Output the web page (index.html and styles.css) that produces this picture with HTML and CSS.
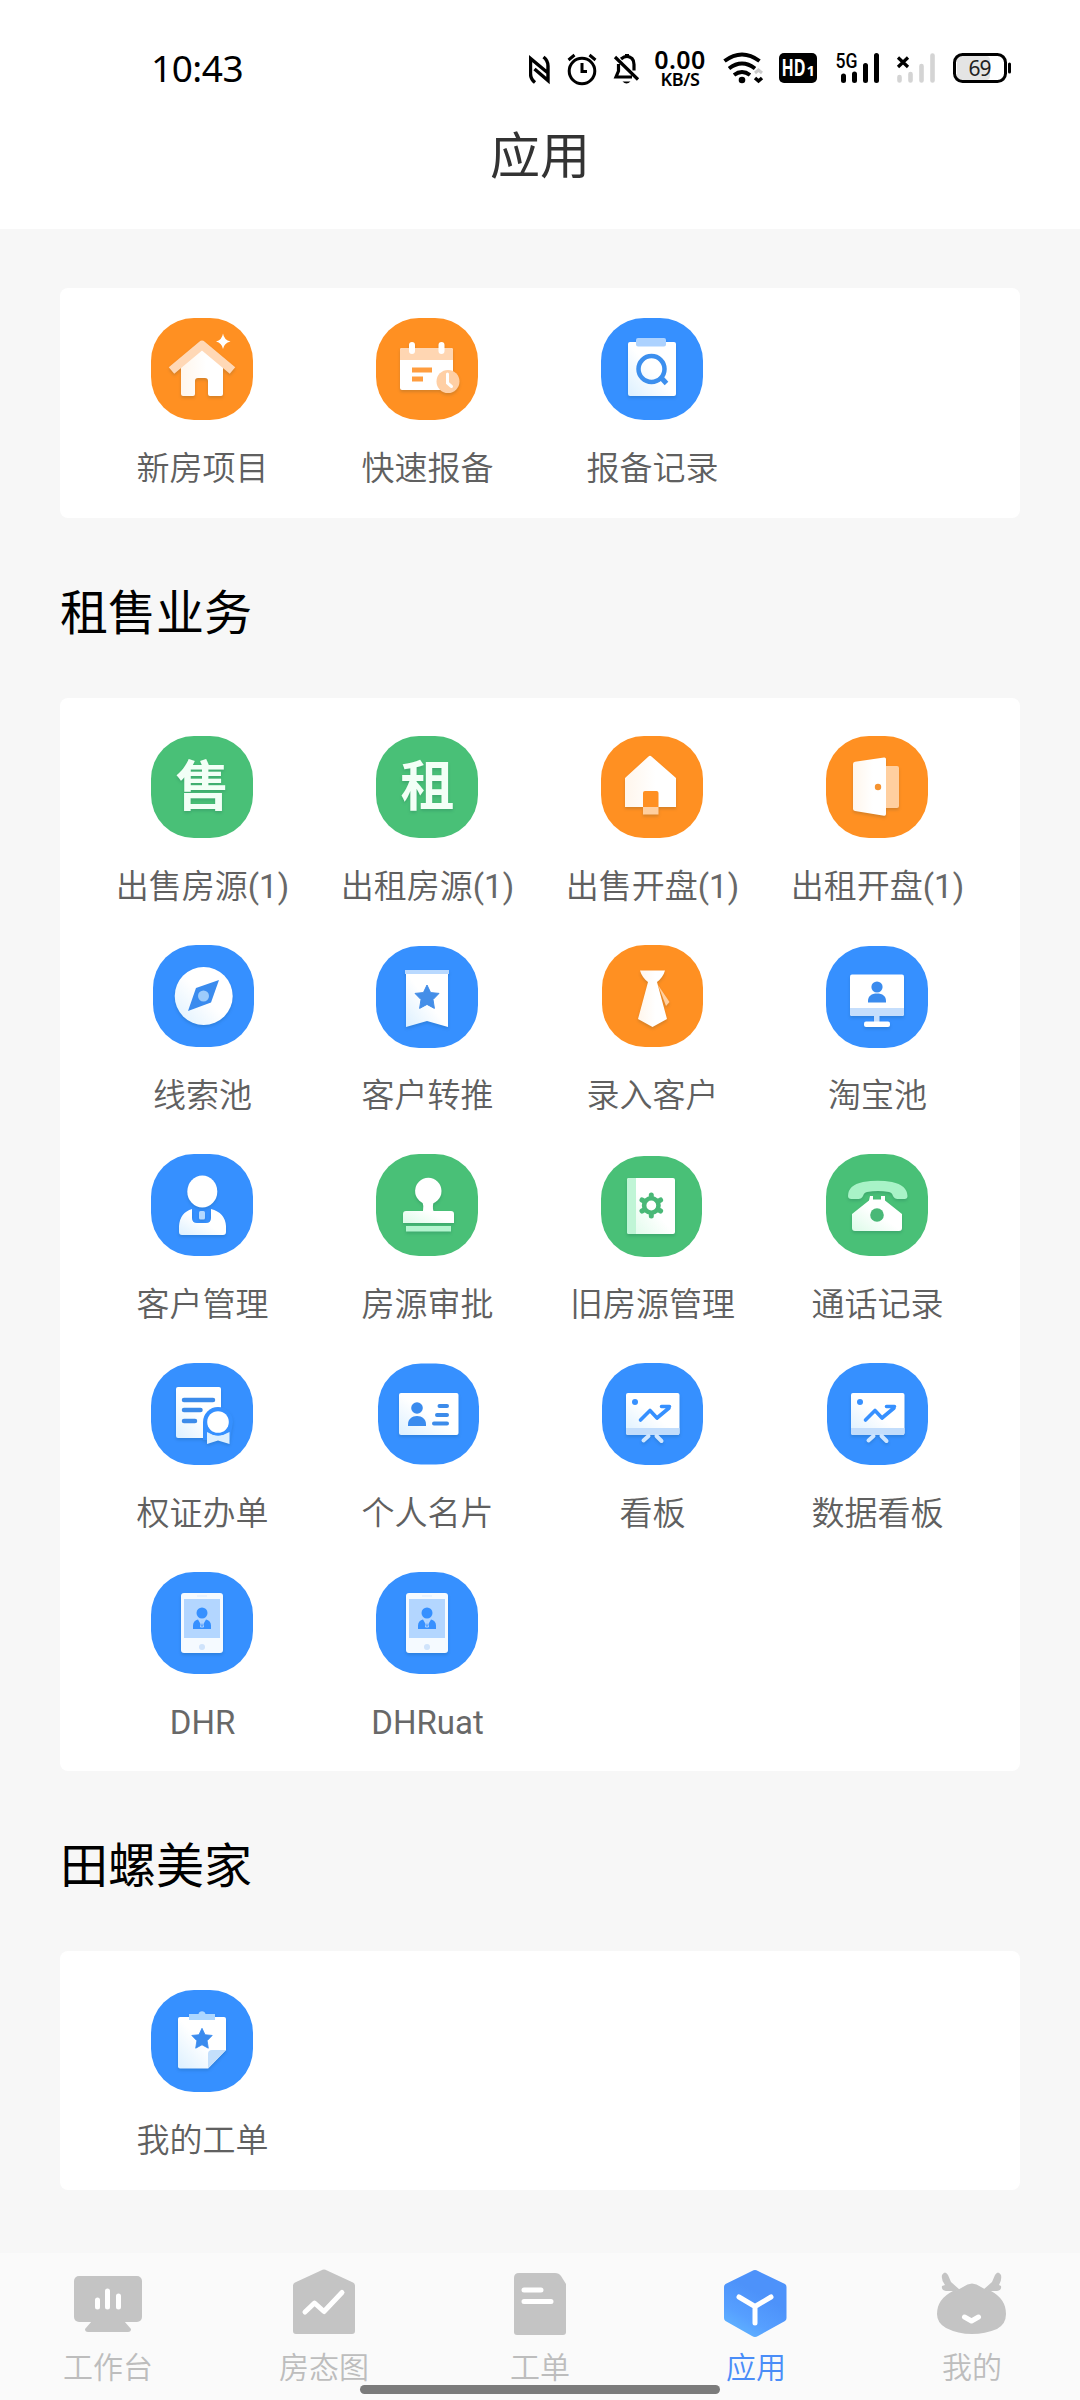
FILE: index.html
```html
<!DOCTYPE html>
<html lang="zh-CN">
<head>
<meta charset="utf-8">
<title>应用</title>
<link rel="stylesheet" href="styles.css">
</head>
<body>
<svg class="defs" width="0" height="0" aria-hidden="true">
  <defs>
    <linearGradient id="paper-blue" x1="0" y1="1" x2="1" y2="0"><stop offset="0" stop-color="#dcf0ff"/><stop offset=".5" stop-color="#fff"/></linearGradient>
    <linearGradient id="paper-green" x1="0" y1="1" x2="1" y2="0"><stop offset="0" stop-color="#dcfbe8"/><stop offset=".5" stop-color="#fff"/></linearGradient>
    <linearGradient id="paper-orange" x1="0" y1="0" x2="1" y2="0"><stop offset="0" stop-color="#fff6ec"/><stop offset=".6" stop-color="#fff"/></linearGradient>
    <linearGradient id="hexagon" x1="0.2" y1="1" x2="0.55" y2="0.35"><stop offset="0" stop-color="#62b6ff"/><stop offset=".45" stop-color="#569fff"/><stop offset="1" stop-color="#4d92fa"/></linearGradient>
    <path id="star" d="M0-12 3.6-4.4 12-3.6 6 2.6 7.4 11.4 0 7.4-7.4 11.4-6 2.6-12-3.6-3.6-4.4Z" stroke-linejoin="round" stroke-width="1"/>
    <g id="chart-board">
      <rect x="25" y="30" width="53.500" height="42" rx="2" fill="url(#paper-blue)"/>
      <path d="M25 65h53.500v5a2 2 0 0 1-2 2h-49.500a2 2 0 0 1-2-2z" fill="#c3ddfb"/>
      <circle cx="34" cy="39" r="3" fill="#3690ff"/>
      <path d="M39.500 57 49 47.500l7 7.500L68 45M60.500 43.500h8" fill="none" stroke="#3690ff" stroke-width="3.600" stroke-linecap="round" stroke-linejoin="round"/>
      <path d="M47.500 73 42.500 77.500M55.500 73l5 5" stroke="#cfe6ff" stroke-width="4" stroke-linecap="round"/>
    </g>
    <g id="phone-card">
      <rect x="30" y="21" width="42" height="60" rx="3" fill="#f5faff"/>
      <rect x="33" y="27" width="36" height="39" fill="#b3d6ff"/>
      <circle cx="51" cy="41" r="5.500" fill="#3690ff"/>
      <path d="M42 57v-3.500c0-3.500 2-5.500 5-6l4 7 4-7c3 .5 5 2.500 5 6V57z" fill="#3690ff"/>
      <path d="m51 48 1.500 7h-3z" fill="#3690ff" stroke="#b3d6ff"/>
      <circle cx="51" cy="75" r="3" fill="#cfe3fb"/>
      <path d="M46 24h10" stroke="#dcebff"/>
    </g>
  </defs>
</svg>

<div class="screen">
  <header class="header">
    <div class="statusbar">
      <span class="clock">10:43</span>
      <div class="status-icons">
        <svg width="22" height="40" viewBox="529 50 22 40"><path d="M535 82.500q-4.500-3.500-4.500-9V58.500L548 73M543.500 57q4.500 3.500 4.500 9v14.500L534.500 69" fill="none" stroke="#000" stroke-width="3.400"/></svg>
        <svg class="i-alarm" width="34" height="40" viewBox="566 50 34 40"><g fill="none" stroke="#000" stroke-width="3"><circle cx="582" cy="71" r="12.800"/><path d="M568.500 60l6-5M595.500 60l-6-5M582 63v8.500h5"/></g></svg>
        <svg class="i-bell" width="28" height="40" viewBox="613 50 28 40"><g fill="none" stroke="#000" stroke-width="3.200"><path d="M615 57 638 79.500M621 59q6-5 11-.5 2 2 2 6v6M618.500 64v7l-2.500 6h16"/></g><path d="M625 54h4v4h-4zM622.500 81.500h8q-4 4-8 0z"/></svg>
        <div class="netspeed"><span class="netspeed-value">0.00</span><span class="netspeed-unit">KB/S</span></div>
        <svg class="i-wifi" width="43" height="40" viewBox="722 50 43 40"><g fill="none" stroke="#000" stroke-width="4"><path d="M724.500 61q17.500-13 35 0M729 68.500q13-10 26 0M734 75q8-6 16 0"/></g><circle cx="742" cy="80" r="3.300"/><path d="M755 73l3.500-3 3.500 3" fill="none" stroke="#ccc" stroke-width="3"/><path d="M755 78l3.500 3 3.500-3" fill="none" stroke="#000" stroke-width="3.500"/></svg>
        <svg class="i-hd" width="38" height="40" viewBox="779 50 38 40"><rect x="779" y="53" width="38" height="30" rx="5"/><text class="hd" transform="translate(781.500 76) scale(.7 1)">HD</text><text class="hd-sub" x="806.500" y="76">1</text></svg>
        <svg class="i-5g" width="45" height="40" viewBox="835 50 45 40"><text class="fiveg" x="835.500" y="68" textLength="22" lengthAdjust="spacingAndGlyphs">5G</text><path d="M843.500 76v4.500M854.500 74v6.500M865.500 65.500v15M876.500 55.500v25" stroke="#000" stroke-width="5" stroke-linecap="round"/></svg>
        <svg class="i-sim" width="40" height="40" viewBox="896 50 40 40"><path d="M898 57.500l10 9.500M908 57.500 898 67" stroke="#000" stroke-width="3.200"/><path d="M899.500 77v3.500M910.500 74v6.500M921.500 66v14.500M932.500 55.500v25" stroke="#d4d4d4" stroke-width="4.600" stroke-linecap="round"/></svg>
        <svg class="i-battery" width="60" height="40" viewBox="952 50 60 40"><rect x="957" y="56" width="33" height="24" rx="4" fill="#e4e4e4"/><rect x="954.500" y="54.500" width="51" height="27" rx="8" fill="none" stroke="#000" stroke-width="3"/><path d="M1009.500 64v8" stroke="#000" stroke-width="3" stroke-linecap="round"/><text class="battery" x="968.500" y="75.500" textLength="23">69</text></svg>
      </div>
    </div>
    <h1 class="title">应用</h1>
  </header>

  <main class="content">
    <section class="card card-projects">
      <div class="tile">
        <svg class="icon orange" viewBox="0 0 102 102"><rect class="bg" width="102" height="102" rx="43"/><g class="glyph"><path d="M30 48 51 31l21 17v28a2 2 0 0 1-2 2H59a2 2 0 0 1-2-2V63a3 3 0 0 0-3-3h-7a3 3 0 0 0-3 3v13a2 2 0 0 1-2 2H32a2 2 0 0 1-2-2z" fill="url(#paper-orange)"/><path d="M20.500 52.500 51 27l30.500 25.500" fill="none" stroke="#ffd8b6" stroke-width="8.500" stroke-linejoin="round"/></g><path d="M72 15.500Q73 22 79.500 23.500 73 25 72 31 71 25 65 23.500 71 22 72 15.500z" fill="#fff"/></svg>
        <span class="label">新房项目</span>
      </div>
      <div class="tile">
        <svg class="icon orange" viewBox="0 0 102 102"><rect class="bg" width="102" height="102" rx="43"/><g class="glyph"><rect x="24" y="30" width="53" height="42" rx="2" fill="#fff"/><path d="M24 42V32a2 2 0 0 1 2-2h49a2 2 0 0 1 2 2v10z" fill="#ffd6b2"/><path d="M36 27v6M65.500 27v6" stroke="#fff" stroke-width="6" stroke-linecap="round"/><path d="M36 52h20M36 61h11" stroke="#ff9d3f" stroke-width="5"/><circle cx="72" cy="63.500" r="11.500" fill="#ffcfa4"/><path d="M71.500 56v9l4 3.500" fill="none" stroke="#fff" stroke-width="3" stroke-linecap="round"/></g></svg>
        <span class="label">快速报备</span>
      </div>
      <div class="tile">
        <svg class="icon blue" viewBox="0 0 102 102"><rect class="bg" width="102" height="102" rx="43"/><g class="glyph"><rect x="27" y="24" width="48" height="54" rx="2" fill="url(#paper-blue)"/><rect x="35" y="20" width="30" height="8.500" rx="2" fill="#acd2ff"/><circle cx="50.500" cy="51" r="13" fill="none" stroke="#3c8fee" stroke-width="4.500"/><path d="M60 59.500l5.500 6" stroke="#3c8fee" stroke-width="5"/></g></svg>
        <span class="label">报备记录</span>
      </div>
    </section>

    <h2 class="section-title">租售业务</h2>
    <section class="card card-rental">
      <div class="tile">
        <svg class="icon green" viewBox="0 0 102 102"><rect class="bg" width="102" height="102" rx="43"/><g class="glyph"><text class="char" x="51.500" y="69.500">售</text></g></svg>
        <span class="label">出售房源<span class="count">(1)</span></span>
      </div>
      <div class="tile">
        <svg class="icon green" viewBox="0 0 102 102"><rect class="bg" width="102" height="102" rx="43"/><g class="glyph"><text class="char" x="51.500" y="69.500">租</text></g></svg>
        <span class="label">出租房源<span class="count">(1)</span></span>
      </div>
      <div class="tile">
        <svg class="icon orange" viewBox="0 0 102 102"><rect class="bg" width="102" height="102" rx="43"/><g class="glyph"><path d="M24 42 47.500 20.500q1.500-1.500 3 0L75 42v29H24z" fill="url(#paper-orange)"/><path d="M42 71V57a2 2 0 0 1 2-2h11.500a2 2 0 0 1 2 2v14z" fill="#ff9022"/><rect x="42" y="71" width="15.500" height="7.500" fill="#ffcf9f"/></g></svg>
        <span class="label">出售开盘<span class="count">(1)</span></span>
      </div>
      <div class="tile">
        <svg class="icon orange" viewBox="0 0 102 102"><rect class="bg" width="102" height="102" rx="43"/><g class="glyph"><rect x="56" y="30" width="17" height="42" rx="2" fill="#ffcf9f"/><path d="M27 28q0-2 2-2.300L58 21.500q2-.3 2 1.500v55q0 2-2 1.700L29 75q-2-.4-2-2z" fill="url(#paper-orange)"/><circle cx="52" cy="51" r="3.200" fill="#f59331"/></g></svg>
        <span class="label">出租开盘<span class="count">(1)</span></span>
      </div>

      <div class="tile">
        <svg class="icon blue" viewBox="0 0 102 102"><rect class="bg" x="2" width="101" height="102" rx="43"/><g class="glyph"><circle cx="52.700" cy="51" r="29" fill="url(#paper-blue)"/><path d="M68 35 60 57.500 37 66l8-23z" fill="#3a8bee"/><circle cx="52.500" cy="51" r="5.500" fill="#9dccfb"/></g></svg>
        <span class="label">线索池</span>
      </div>
      <div class="tile">
        <svg class="icon blue" viewBox="0 0 102 102"><rect class="bg" y="1" width="102" height="102" rx="43"/><g class="glyph"><path d="M30 27h42v55l-21-6-21 6z" fill="url(#paper-blue)"/><rect x="29" y="25" width="44" height="4" fill="#b9d9ff"/><use href="#star" x="51" y="52" fill="#448ee8" stroke="#448ee8"/></g></svg>
        <span class="label">客户转推</span>
      </div>
      <div class="tile">
        <svg class="icon orange" viewBox="0 0 102 102"><rect class="bg" x="1" width="101" height="102" rx="43"/><g class="glyph"><path d="M57 40l11.500 17-3.500 4z" fill="#ffcf9f"/><path d="M39 25.500h25q-2 7-8 11.500L66 74 51.500 82 37 74 47 37q-6-4.500-8-11.500z" fill="url(#paper-orange)"/></g></svg>
        <span class="label">录入客户</span>
      </div>
      <div class="tile">
        <svg class="icon blue" viewBox="0 0 102 102"><rect class="bg" y="1" width="102" height="102" rx="43"/><g class="glyph"><rect x="48" y="70" width="5.500" height="8" fill="#c5defc"/><rect x="24" y="29.500" width="54" height="41.500" rx="2" fill="#fff"/><path d="M24 63h54v6a2 2 0 0 1-2 2H26a2 2 0 0 1-2-2z" fill="#c5defc"/><circle cx="51" cy="42" r="5.600" fill="#3a8bee"/><path d="M42 57.500V56c0-5 3.500-7.500 9-7.500s9 2.500 9 7.500v1.500z" fill="#3a8bee"/><rect x="38" y="76.500" width="26" height="5.500" rx="2" fill="#fff"/></g></svg>
        <span class="label">淘宝池</span>
      </div>

      <div class="tile">
        <svg class="icon blue" viewBox="0 0 102 102"><rect class="bg" width="102" height="102" rx="43"/><g class="glyph"><ellipse cx="51.300" cy="37.500" rx="15" ry="16" fill="#fff"/><path d="M28 72q1-13.500 13-17v9q0 5 5 5h9q5 0 5-5v-9Q74 58.500 75 72v6q0 3-3 3H31q-3 0-3-3z" fill="url(#paper-blue)"/><rect x="48" y="57" width="6" height="8.500" rx="1.500" fill="#b5d9ff"/></g></svg>
        <span class="label">客户管理</span>
      </div>
      <div class="tile">
        <svg class="icon green" viewBox="0 0 102 102"><rect class="bg" width="102" height="102" rx="43"/><g class="glyph"><circle cx="52.300" cy="37" r="13.200" fill="#fff"/><path d="M46 46h12q-2 7-.5 11H75q3 0 3 3v9H27v-9q0-3 3-3h17q1-5-1-11z" fill="url(#paper-green)"/><rect x="30" y="72" width="45" height="5.500" fill="#b4f5cf"/></g></svg>
        <span class="label">房源审批</span>
      </div>
      <div class="tile">
        <svg class="icon green" viewBox="0 0 102 102"><rect class="bg" y="2" width="101" height="101" rx="43"/><g class="glyph"><rect x="26" y="24" width="48" height="56" rx="2" fill="url(#paper-green)"/><path d="M35 24v56h-7a2 2 0 0 1-2-2V26a2 2 0 0 1 2-2z" fill="#c0f5d6"/><circle cx="50.300" cy="51.500" r="7.200" fill="none" stroke="#49b877" stroke-width="4.600"/><path d="M50.300 43v-2M50.300 62v-2M43 47.200l-2-1.200M57.600 47.200l2-1.200M43 55.800 41 57M57.600 55.800l2 1.200" stroke="#49b877" stroke-width="5" stroke-linecap="round"/></g></svg>
        <span class="label">旧房源管理</span>
      </div>
      <div class="tile">
        <svg class="icon green" viewBox="0 0 102 102"><rect class="bg" width="102" height="102" rx="43"/><g class="glyph"><path d="M22 42q0-11 15-14 15-2.500 29 0 15 3 15.500 14 0 3-3 3h-7q-3 0-4.500-3-1-3.500-4-4-11-2-22 0-3 .5-4 4-1.500 3-4.500 3h-7q-3.500 0-3.500-3z" fill="#a8f3c7"/><path d="M44 42h3v3.500h8V42h4v4.500L76 60v14q0 3-3 3H29q-3 0-3-3V60l17-13.500z" fill="url(#paper-green)"/><circle cx="51" cy="61" r="6.800" fill="#49b877"/></g></svg>
        <span class="label">通话记录</span>
      </div>

      <div class="tile">
        <svg class="icon blue" viewBox="0 0 102 102"><rect class="bg" width="102" height="102" rx="43"/><g class="glyph"><rect x="25" y="24" width="45" height="51" rx="2" fill="url(#paper-blue)"/><path d="M33 37h29M33 47h16.500M33 58h11" stroke="#3c8bea" stroke-width="4.500" stroke-linecap="round"/><path d="M52 59a15 15 0 0 1 30 0l-3 18H52z" fill="#3690ff"/><path d="M56 69q11 7 22.500 0V81L67 77.500 56 81z" fill="#dcefff"/><circle cx="67" cy="59" r="13.500" fill="#3690ff"/><circle cx="67" cy="59" r="10.800" fill="#fff"/></g></svg>
        <span class="label">权证办单</span>
      </div>
      <div class="tile">
        <svg class="icon blue" viewBox="0 0 102 102"><rect class="bg" x="2" y=".5" width="101" height="101" rx="43"/><g class="glyph"><rect x="23" y="30" width="59.500" height="42" rx="2" fill="url(#paper-blue)"/><circle cx="41" cy="45" r="5.800" fill="#3a8bee"/><path d="M32 63v-1.500c0-5.500 4-8.500 9-8.500s9 3 9 8.500V63z" fill="#3a8bee"/><path d="M63.500 43H71M61 52h10M58 60.500h13" stroke="#3c8bea" stroke-width="4" stroke-linecap="round"/></g></svg>
        <span class="label">个人名片</span>
      </div>
      <div class="tile">
        <svg class="icon blue" viewBox="0 0 102 102"><rect class="bg" x="1" width="101" height="102" rx="43"/><g class="glyph"><use href="#chart-board"/></g></svg>
        <span class="label">看板</span>
      </div>
      <div class="tile">
        <svg class="icon blue" viewBox="0 0 102 102"><rect class="bg" x="1" width="101" height="102" rx="43"/><g class="glyph"><use href="#chart-board"/></g></svg>
        <span class="label">数据看板</span>
      </div>

      <div class="tile">
        <svg class="icon blue" viewBox="0 0 102 102"><rect class="bg" width="102" height="102" rx="43"/><g class="glyph"><use href="#phone-card"/></g></svg>
        <span class="label latin">DHR</span>
      </div>
      <div class="tile">
        <svg class="icon blue" viewBox="0 0 102 102"><rect class="bg" width="102" height="102" rx="43"/><g class="glyph"><use href="#phone-card"/></g></svg>
        <span class="label latin">DHRuat</span>
      </div>
    </section>

    <h2 class="section-title">田螺美家</h2>
    <section class="card card-home">
      <div class="tile">
        <svg class="icon blue" viewBox="0 0 102 102"><rect class="bg" width="102" height="102" rx="43"/><g class="glyph"><path d="M29 27h44q2 0 2 2v31L57 78.500H29q-2 0-2-2V29q0-2 2-2z" fill="url(#paper-blue)"/><path d="M75 60 57 78.500V64q0-4 4-4z" fill="#c4dffb"/><path d="M38 30v-6h9.500a3.600 3.600 0 0 1 7 0H64v6z" fill="#acd7ff"/><use href="#star" transform="translate(51 48.500) scale(.85)" fill="#3a8bee" stroke="#3a8bee"/></g></svg>
        <span class="label">我的工单</span>
      </div>
    </section>
  </main>

  <nav class="tabbar">
    <div class="tab">
      <svg class="tab-icon" viewBox="68 2263 80 80"><rect x="74" y="2276" width="68" height="46" rx="5"/><path d="M92 2321h32l7 8q0 3-3 3H88q-3 0-3-3z"/><path d="M97.500 2300v7M107.500 2291v16M118.500 2296v11" class="line"/></svg>
      <span>工作台</span>
    </div>
    <div class="tab">
      <svg class="tab-icon" viewBox="284 2263 80 80"><path d="M321 2270.500q3-2 6 0l26 12q2 1 2 3V2331q0 3-3 3h-56q-3 0-3-3v-45.500q0-2 2-3z"/><path d="M305 2312l9.500-9 9.500 8.500 18-19" class="line"/></svg>
      <span>房态图</span>
    </div>
    <div class="tab">
      <svg class="tab-icon" viewBox="500 2263 80 80"><path d="M519 2273h36q4 0 6 3l5 8v48q0 3-3 3h-46q-3 0-3-3v-54q0-5 5-5z"/><path d="M524 2290h17M524 2301.500h27" class="line"/></svg>
      <span>工单</span>
    </div>
    <div class="tab active">
      <svg class="tab-icon" viewBox="716 2263 80 80"><path d="M752 2271q3-2 6 0l27 13q1.500 1 1.500 3v31q0 2-1.500 3l-27 15q-3 2-6 0l-26.500-15q-1.500-1-1.500-3v-31q0-2 1.500-3z" fill="url(#hexagon)"/><path d="M739 2297l16 9.500 16-9.500M755 2306v17" class="line"/></svg>
      <span>应用</span>
    </div>
    <div class="tab">
      <svg class="tab-icon" viewBox="932 2263 80 80"><path d="M953 2291q6-1 10-4 9-7 18 0 4 3 10 4 15 8 15 23 0 10-9 15-12 5-25 5-14 0-26-6-9-5-9-14 0-15 16-23z"/><path d="M956 2291h-10q-5-1-4-5l3-1q-4-5-3-10 3-5 6 0l3 7 9 8zM988 2291h9q5-1 4-5l-2-1q3-5 2-10-3-5-6 0l-3 7-9 8z"/><path d="M964.500 2317l7 4 7-4" class="line"/></svg>
      <span>我的</span>
    </div>
    <div class="home-indicator"></div>
  </nav>
</div>
</body>
</html>
```
FILE: styles.css
```css
* { box-sizing: border-box; }

body {
  margin: 0;
  background: #f7f7f7;
  font-family: Roboto, "Noto Sans CJK SC", sans-serif;
}

.defs { position: absolute; }

.screen {
  display: flex;
  flex-direction: column;
  width: 1080px;
  height: 2400px;
}

.header {
  flex: none;
  height: 229px;
  background: #fff;
}

/* Status bar */
.statusbar {
  display: flex;
  justify-content: space-between;
  padding: 50px 68px 0 151px;
  height: 110px;
}

.clock {
  font: 400 37px/35px "Noto Sans", sans-serif;
  letter-spacing: -.5px;
  color: #000;
}

.status-icons { display: flex; height: 40px; }
.status-icons svg { display: block; }
.i-alarm { margin-left: 15px; }
.i-bell { margin-left: 13px; }
.i-wifi { margin-left: 15px; }
.i-hd { margin-left: 14px; }
.i-5g { margin-left: 18px; }
.i-sim { margin-left: 16px; }
.i-battery { margin-left: 16px; }

.netspeed {
  display: flex;
  flex-direction: column;
  align-items: center;
  width: 54px;
  margin-left: 12px;
  font-family: "Noto Sans", sans-serif;
  font-weight: 600;
}
.netspeed-value { font-size: 25px; line-height: 18px; letter-spacing: .4px; }
.netspeed-unit { font-size: 18px; line-height: 22px; letter-spacing: -.4px; }

.hd { font: 700 23px "Noto Sans", sans-serif; fill: #fff; }
.hd-sub { font: 700 15px "Noto Sans", sans-serif; fill: #fff; }
.fiveg { font: 500 21px Roboto, sans-serif; }
.battery { font: 400 21px "Noto Sans", sans-serif; fill: #222; }

.title {
  margin: 12px 0 0;
  font-size: 50px;
  line-height: 70px;
  font-weight: 400;
  text-align: center;
  color: #333;
}

/* Content */
.content {
  flex: 1;
  padding: 59px 60px 0;
}

.card {
  display: grid;
  grid-template-columns: repeat(4, 225px);
  grid-auto-rows: 199px;
  row-gap: 10px;
  padding: 30px 30px 0;
  background: #fff;
  border-radius: 8px;
}
.card-projects { height: 230px; }
.card-rental { padding-top: 38px; height: 1073px; }
.card-home { padding-top: 39px; height: 239px; }

.section-title {
  height: 180px;
  margin: 0;
  padding-top: 61px;
  font-size: 48px;
  line-height: 70px;
  font-weight: 400;
  color: #000;
}

.tile {
  display: flex;
  flex-direction: column;
  align-items: center;
}

.icon { display: block; width: 102px; height: 102px; margin-right: 1px; overflow: visible; }
.orange .bg { fill: #ff9022; }
.blue .bg { fill: #3690ff; }
.green .bg { fill: #49c077; }
.glyph { filter: drop-shadow(0 2px 1.5px rgba(0, 50, 60, .16)); }
.char {
  font: 700 54px "Noto Sans CJK SC", sans-serif;
  text-anchor: middle;
  fill: #f2fff6;
}

.label {
  margin-top: 26px;
  font-size: 33px;
  font-weight: 350;
  line-height: 46px;
  white-space: nowrap;
  color: #606060;
}
.latin, .count { font-weight: 400; color: #686868; }

/* Bottom navigation */
.tabbar {
  position: relative;
  flex: none;
  display: grid;
  grid-template-columns: repeat(5, 1fr);
  height: 147px;
  padding-top: 10px;
  background: #fafafa;
}

.tab {
  display: flex;
  flex-direction: column;
  align-items: center;
  font-size: 30px;
  font-weight: 350;
  line-height: 40px;
  color: #bdbdbd;
}
.tab.active { color: #4a8df8; }
.tab-icon { display: block; width: 80px; height: 80px; margin-bottom: 5px; fill: #c4c4c4; }
.tab-icon .line {
  fill: none;
  stroke: #fff;
  stroke-width: 5;
  stroke-linecap: round;
  stroke-linejoin: round;
}

.home-indicator {
  position: absolute;
  left: 360px;
  top: 132px;
  width: 360px;
  height: 9px;
  border-radius: 5px;
  background: #7b7b7b;
}
```
